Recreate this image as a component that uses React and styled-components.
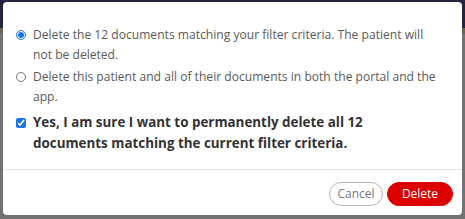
import React from 'react';
import styled, { createGlobalStyle } from 'styled-components';

const GlobalStyle = createGlobalStyle`
  html, body {
    margin: 0;
    padding: 0;
    width: 465px;
    height: 219px;
    overflow: hidden;
    font-family: "Open Sans", "Liberation Sans", sans-serif;
  }
`;

const Backdrop = styled.div`
  width: 465px;
  height: 219px;
  box-sizing: border-box;
  padding: 2px 3px 4px 3px;
  background: linear-gradient(
    to bottom,
    #24243d 0,
    #24243d 28px,
    #6e6256 28px,
    #6e6256 34px,
    #727272 34px,
    #727272 100%
  );
`;

const Dialog = styled.div`
  height: 100%;
  background: #fff;
  border-radius: 4px;
  display: flex;
  flex-direction: column;
  overflow: hidden;
`;

const Body = styled.div`
  flex: 1;
  padding: 23px 17px 0 13px;
  display: flex;
  flex-direction: column;
  gap: 2px;
  border-bottom: 1px solid #e6e6e6;
`;

const Option = styled.label`
  display: flex;
  align-items: flex-start;
  gap: 7px;
  color: ${p => (p.$strong ? '#333' : '#5a5a5a')};
  font-weight: ${p => (p.$strong ? 700 : 400)};
  font-size: ${p => (p.$strong ? '13.4px' : '12.1px')};
  line-height: ${p => (p.$strong ? '21px' : '20px')};
  margin-top: ${p => (p.$strong ? '3px' : '0')};
  padding-right: ${p => (p.$strong ? '44px' : '0')};

  input {
    margin: ${p => (p.$strong ? '6px' : '5px')} 0 0 0;
    width: 10px;
    height: 10px;
    flex: none;
    accent-color: #1a73e8;
  }
`;

const Footer = styled.div`
  height: 43px;
  display: flex;
  align-items: center;
  justify-content: flex-end;
  gap: 4px;
  padding: 2px 9px 0 0;
`;

const Button = styled.button`
  height: 24px;
  border-radius: 12px;
  font-family: "Open Sans", "Liberation Sans", sans-serif;
  font-size: 12px;
  padding: 0;
  cursor: pointer;
  width: ${p => (p.$primary ? '66px' : '54px')};
  border: 1px solid ${p => (p.$primary ? '#dd0000' : '#b5b5b5')};
  background: ${p => (p.$primary ? '#dd0000' : '#fff')};
  color: ${p => (p.$primary ? '#fff' : '#777')};
`;

export default function App() {
  return (
    <>
      <GlobalStyle />
      <Backdrop>
        <Dialog>
          <Body>
            <Option>
              <input type="radio" name="del" defaultChecked />
              <span>Delete the 12 documents matching your filter criteria. The patient will not be deleted.</span>
            </Option>
            <Option>
              <input type="radio" name="del" />
              <span>Delete this patient and all of their documents in both the portal and the app.</span>
            </Option>
            <Option $strong>
              <input type="checkbox" defaultChecked />
              <span>Yes, I am sure I want to permanently delete all 12 documents matching the current filter criteria.</span>
            </Option>
          </Body>
          <Footer>
            <Button>Cancel</Button>
            <Button $primary>Delete</Button>
          </Footer>
        </Dialog>
      </Backdrop>
    </>
  );
}
